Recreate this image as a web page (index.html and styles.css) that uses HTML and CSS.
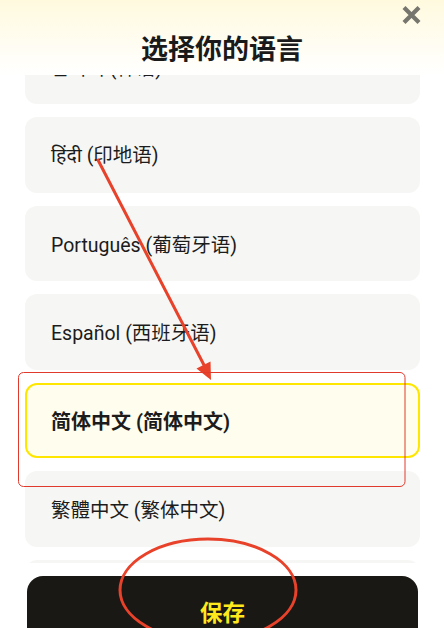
FILE: index.html
```html
<!DOCTYPE html>
<html lang="zh-CN">
<head>
<meta charset="utf-8">
<title>选择你的语言</title>
<link rel="stylesheet" href="styles.css">
</head>
<body>
<div class="app">
  <header class="header">
    <h1 class="title">选择你的语言</h1>
    <button class="close" aria-label="关闭">
      <svg width="19" height="18" viewBox="0 0 19 18"><path d="M2 1.5 L17 16.5 M17 1.5 L2 16.5" stroke="#76766f" stroke-width="4.2" stroke-linecap="butt"/></svg>
    </button>
  </header>
  <div class="list">
    <div class="list-inner">
      <div class="item">한국어 (韩语)</div>
      <div class="item">हिंदी (印地语)</div>
      <div class="item">Português (葡萄牙语)</div>
      <div class="item">Español (西班牙语)</div>
      <div class="item selected">简体中文 (简体中文)</div>
      <div class="item">繁體中文 (繁体中文)</div>
      <div class="item">Deutsch (德语)</div>
    </div>
  </div>
  <footer class="footer">
    <button class="save">保存</button>
  </footer>
  <svg class="annot" width="444" height="628" viewBox="0 0 444 628">
    <line x1="98" y1="160" x2="205" y2="367" stroke="#e8422b" stroke-width="3" stroke-linecap="round"/>
    <polygon points="211,380 196.5,368.5 210.5,361.5" fill="#e8422b"/>
    <rect x="18.5" y="372.5" width="386.5" height="114" rx="5" fill="none" stroke="#e03a2c" stroke-width="1"/>
    <ellipse cx="208" cy="590" rx="88" ry="51" fill="none" stroke="#e8422b" stroke-width="3"/>
  </svg>
</div>
</body>
</html>
```
FILE: styles.css
```css
* { box-sizing: border-box; }
html, body { margin: 0; padding: 0; background: #fff; }
body { width: 444px; height: 628px; overflow: hidden; font-family: Roboto, "Noto Sans", "Noto Sans CJK SC", sans-serif; color: #1b1b1b; }
.app { position: relative; width: 444px; height: 628px; overflow: hidden; display: flex; flex-direction: column; }
.header {
  position: relative; z-index: 2; height: 75px; flex: none;
  background: linear-gradient(180deg, #fffade 0%, #fffcec 40%, #ffffff 100%);
  display: flex; align-items: flex-start; justify-content: center;
}
.title { margin: 31px 0 0; font-family: "Noto Sans CJK SC", sans-serif; font-size: 27px; font-weight: 700; line-height: 34px; color: #1a1a1a; }
.close { position: absolute; right: 23px; top: 6px; width: 19px; height: 18px; padding: 0; border: 0; background: none; }
.close svg { display: block; }
.list { height: 488px; flex: none; overflow: hidden; }
.list-inner { margin-top: -46.5px; display: flex; flex-direction: column; gap: 13px; padding: 0 24px 0 25px; }
.item {
  height: 75.5px; border-radius: 12px; background: #f6f6f4;
  display: flex; align-items: center; padding-left: 26px;
  font-size: 19.5px; font-family: Roboto, "Noto Sans Devanagari", "Noto Sans", "Noto Sans CJK SC", sans-serif;
  color: #1c1c1c;
}
.item.selected { border: 2px solid #ffe600; background: #fffeee; padding-left: 24px; font-weight: 700; font-size: 20px; }
.footer { position: relative; z-index: 2; background: #fff; padding: 13px 26px 0 27px; flex: none; }
.save {
  display: flex; align-items: center; justify-content: center; width: 100%; height: 70px;
  border: 0; border-radius: 16px; background: #1a1814; color: #ffe81c;
  font-family: "Noto Sans CJK SC", sans-serif; font-size: 22.5px; font-weight: 700; padding: 0;
}
.annot { position: absolute; left: 0; top: 0; z-index: 5; pointer-events: none; }
```
